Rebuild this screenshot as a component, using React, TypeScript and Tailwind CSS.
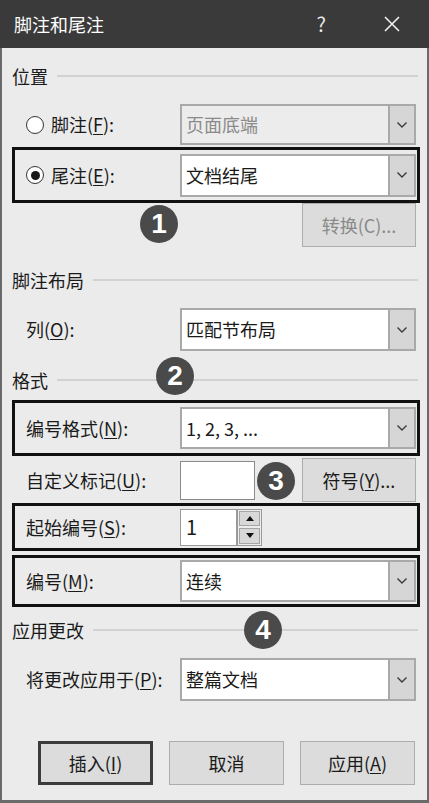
import React from 'react';

const FONT = "font-['Noto_Sans_CJK_SC','Noto_Sans',sans-serif]";

function Chevron() {
  return (
    <svg width="12" height="8" viewBox="0 0 12 8" fill="none">
      <polyline points="1.5,1.5 6,6 10.5,1.5" stroke="#3a3a3a" strokeWidth="1.4" />
    </svg>
  );
}

function Key({ k }: { k: string }) {
  return <span className="underline underline-offset-2 decoration-1">{k}</span>;
}

function Dropdown({ value, h, disabled }: { value: string; h: string; disabled?: boolean }) {
  return (
    <div className={`flex w-[236px] ${h} border-2 border-[#a9a9a9] ${disabled ? 'bg-[#ececec]' : 'bg-white'}`}>
      <div className={`flex-1 flex items-center pl-[4px] text-[18px] ${disabled ? 'text-[#8a8a8a]' : 'text-[#1a1a1a]'}`}>
        {value}
      </div>
      <div className="w-[26px] flex items-center justify-center bg-[#d6d6d6] border-l-2 border-[#a9a9a9]">
        <Chevron />
      </div>
    </div>
  );
}

function Radio({ checked }: { checked?: boolean }) {
  return (
    <span className="w-[18px] h-[18px] rounded-full border-[1.5px] border-[#333] bg-white flex items-center justify-center shrink-0">
      {checked && <span className="w-[9px] h-[9px] rounded-full bg-[#1a1a1a]" />}
    </span>
  );
}

function Header({ title, mt }: { title: string; mt: string }) {
  return (
    <div className={`flex items-center h-[20px] pl-[10px] pr-[9px] ${mt}`}>
      <span className="text-[18px] text-[#1a1a1a] leading-none">{title}</span>
      <div className="flex-1 h-[2px] bg-[#d2d2d2] ml-[9px]" />
    </div>
  );
}

function Badge({ n, pos }: { n: string; pos: string }) {
  return (
    <div className={`absolute ${pos} w-[38px] h-[38px] rounded-full bg-[#4a4a4a] flex items-center justify-center text-white text-[28px] font-bold font-['Liberation_Sans',Arial,sans-serif] leading-none`}>
      {n}
    </div>
  );
}

function Btn({ children, def, disabled, w = 'w-[115px]' }: { children: React.ReactNode; def?: boolean; disabled?: boolean; w?: string }) {
  return (
    <div
      className={`${w} h-[44px] flex items-center justify-center text-[18px] bg-[#dcdcdc] ${
        def ? 'border-[3px] border-[#3c3c3c]' : 'border border-[#adadad]'
      } ${disabled ? 'text-[#8a8a8a]' : 'text-[#1a1a1a]'}`}
    >
      {children}
    </div>
  );
}

export default function App() {
  return (
    <div className={`relative w-[429px] h-[803px] bg-[#3a3a3a] ${FONT}`}>
      {/* title bar */}
      <div className="h-[48px] flex items-center pl-[14px] text-white">
        <span className="text-[18px] leading-none">脚注和尾注</span>
        <span className="ml-auto mr-[57px] text-[20px] leading-none text-[#e8e8e8]">?</span>
        <svg width="18" height="18" viewBox="0 0 18 18" className="mr-[28px]">
          <path d="M2 2 L16 16 M16 2 L2 16" stroke="#f0f0f0" strokeWidth="1.6" />
        </svg>
      </div>

      {/* body */}
      <div className="h-[755px] bg-[#ebebeb] border-x-2 border-b-[3px] border-[#6a6a6a] flex flex-col text-[#1a1a1a]">
        <Header title="位置" mt="mt-[18px]" />

        <div className="flex items-center h-[41px] mt-[18px]">
          <div className="w-[178px] pl-[24px] flex items-center gap-[7px] text-[18px]">
            <Radio />
            <span>脚注(<Key k="F" />):</span>
          </div>
          <Dropdown value="页面底端" h="h-[41px]" disabled />
        </div>

        <div className="flex items-center h-[56px] mt-[2px] ml-[10px] w-[408px] border-[3px] border-[#111]">
          <div className="w-[165px] pl-[11px] flex items-center gap-[7px] text-[18px]">
            <Radio checked />
            <span>尾注(<Key k="E" />):</span>
          </div>
          <Dropdown value="文档结尾" h="h-[43px]" />
        </div>

        <div className="flex h-[45px] ml-[300px]">
          <Btn disabled w="w-[114px]">转换(C)...</Btn>
        </div>

        <Header title="脚注布局" mt="mt-[22px]" />

        <div className="flex items-center h-[43px] mt-[18px]">
          <div className="w-[178px] pl-[24px] text-[18px]">
            列(<Key k="O" />):
          </div>
          <Dropdown value="匹配节布局" h="h-[43px]" />
        </div>

        <Header title="格式" mt="mt-[19px]" />

        <div className="flex items-center h-[56px] mt-[10px] ml-[10px] w-[408px] border-[3px] border-[#111]">
          <div className="w-[165px] pl-[11px] text-[18px]">
            编号格式(<Key k="N" />):
          </div>
          <Dropdown value="1, 2, 3, ..." h="h-[42px]" />
        </div>

        <div className="flex items-center h-[44px] mt-[2px]">
          <div className="w-[178px] pl-[24px] text-[18px]">
            自定义标记(<Key k="U" />):
          </div>
          <div className="w-[75px] h-[39px] bg-white border border-[#8a8a8a]" />
          <div className="ml-[47px]">
            <Btn w="w-[114px]">
              符号(<Key k="Y" />)...
            </Btn>
          </div>
        </div>

        <div className="flex items-center h-[48px] mt-[1px] ml-[10px] w-[408px] border-[3px] border-[#111]">
          <div className="w-[165px] pl-[11px] text-[18px]">
            起始编号(<Key k="S" />):
          </div>
          <div className="flex h-[37px]">
            <div className="w-[57px] h-full bg-white border border-[#9a9a9a] flex items-center pl-[5px] text-[20px]">1</div>
            <div className="w-[25px] h-full flex flex-col border border-[#9a9a9a] bg-[#ececec]">
              <div className="flex-1 m-[1px] bg-[#d8d8d8] border border-[#a5a5a5] flex items-center justify-center">
                <svg width="8" height="5" viewBox="0 0 8 5"><polygon points="0,5 8,5 4,0" fill="#111" /></svg>
              </div>
              <div className="flex-1 m-[1px] bg-[#d8d8d8] border border-[#a5a5a5] flex items-center justify-center">
                <svg width="8" height="5" viewBox="0 0 8 5"><polygon points="0,0 8,0 4,5" fill="#111" /></svg>
              </div>
            </div>
          </div>
        </div>

        <div className="flex items-center h-[52px] mt-[4px] ml-[10px] w-[408px] border-[3px] border-[#111]">
          <div className="w-[165px] pl-[11px] text-[18px]">
            编号(<Key k="M" />):
          </div>
          <Dropdown value="连续" h="h-[42px]" />
        </div>

        <Header title="应用更改" mt="mt-[13px]" />

        <div className="flex items-center h-[43px] mt-[18px]">
          <div className="w-[178px] pl-[24px] text-[18px] whitespace-nowrap">
            将更改应用于(<Key k="P" />):
          </div>
          <Dropdown value="整篇文档" h="h-[43px]" />
        </div>

        <div className="flex items-center mt-[40px] ml-[36px] gap-[16px]">
          <Btn def>
            插入(<Key k="I" />)
          </Btn>
          <Btn>取消</Btn>
          <Btn>
            应用(<Key k="A" />)
          </Btn>
        </div>
      </div>

      <Badge n="1" pos="left-[140px] top-[205px]" />
      <Badge n="2" pos="left-[156px] top-[357px]" />
      <Badge n="3" pos="left-[257px] top-[462px]" />
      <Badge n="4" pos="left-[244px] top-[611px]" />
    </div>
  );
}
